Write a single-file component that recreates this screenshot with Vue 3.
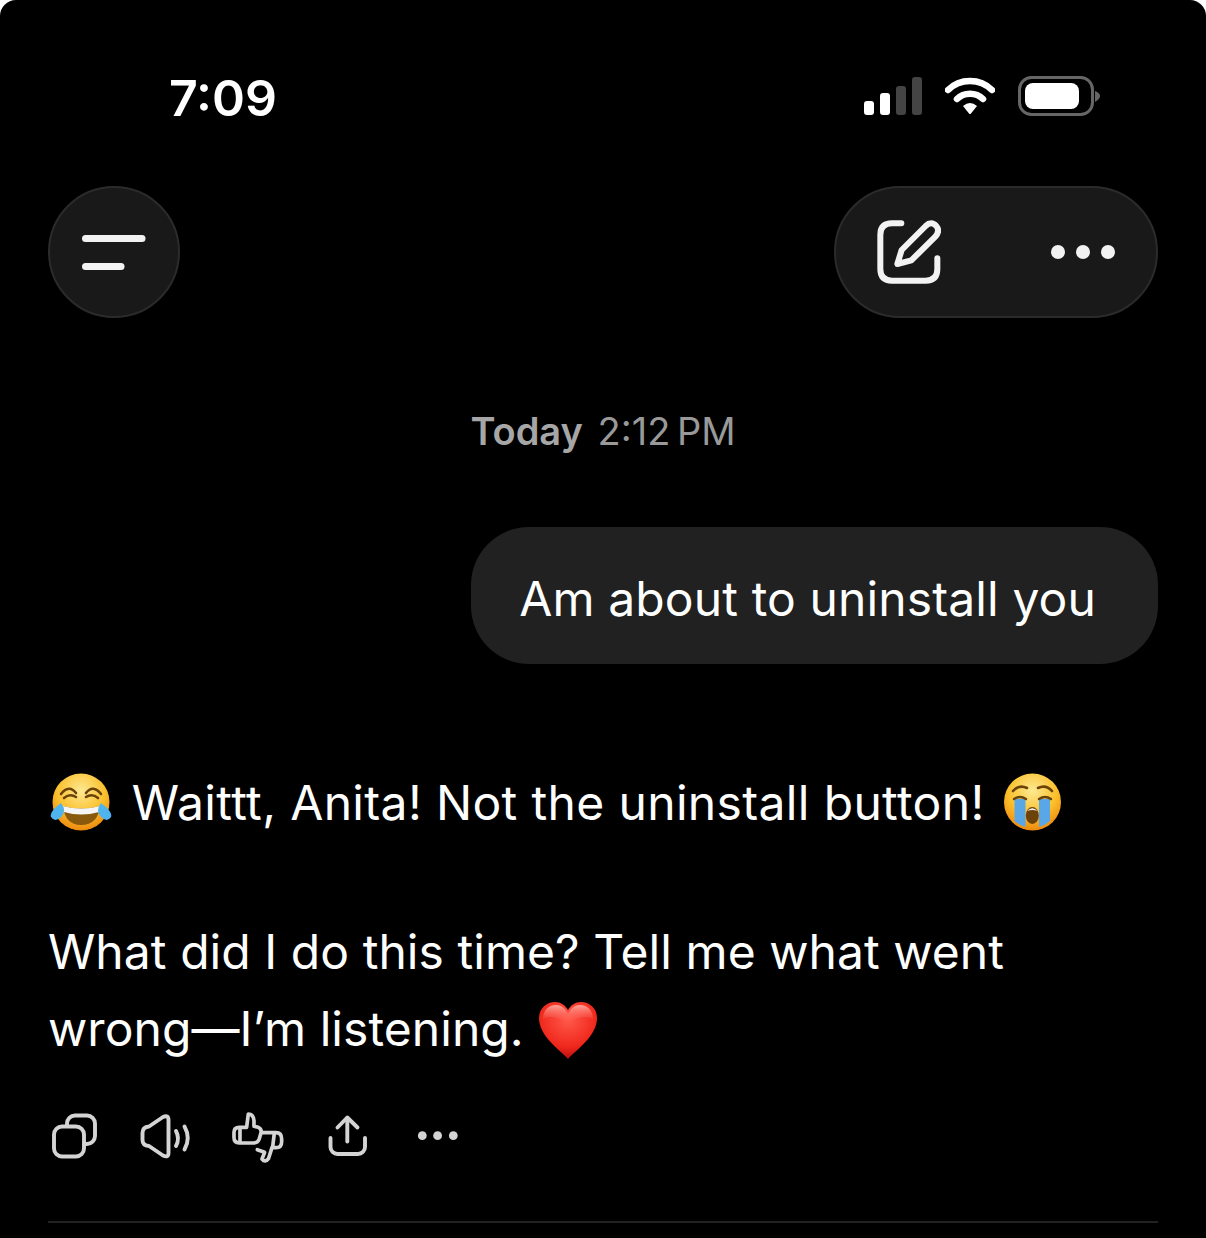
<script setup>
const message = "Am about to uninstall you";
</script>

<template>
  <div class="screen">
    <div class="status">
      <span class="time">7:09</span>
      <div class="status-icons">
        <svg width="58" height="38" viewBox="0 0 58 38">
          <rect x="0" y="24" width="10" height="14" rx="3" fill="#fff" />
          <rect x="16" y="16" width="10" height="22" rx="3" fill="#fff" />
          <rect x="32" y="9" width="10" height="29" rx="3" fill="#444" />
          <rect x="48" y="0" width="10" height="38" rx="3" fill="#444" />
        </svg>
        <svg width="50" height="38" viewBox="0 0 50 38">
          <path d="M3 13 C15 1 35 1 47 13" fill="none" stroke="#fff" stroke-width="6.5" stroke-linecap="round" />
          <path d="M12 22 C19 15 31 15 38 22" fill="none" stroke="#fff" stroke-width="6.5" stroke-linecap="round" />
          <path d="M18 29 Q25 23 32 29 L26 36.5 Q25 37.5 24 36.5 Z" fill="#fff" />
        </svg>
        <svg width="82" height="40" viewBox="0 0 82 40">
          <rect x="1.5" y="1.5" width="73" height="37" rx="12" fill="none" stroke="#666" stroke-width="3" />
          <rect x="7" y="7" width="54" height="26" rx="8" fill="#fff" />
          <path d="M77 15 Q82 17 82 20 Q82 23 77 26 Z" fill="#666" />
        </svg>
      </div>
    </div>

    <div class="header">
      <button class="round-btn">
        <svg width="64" height="40" viewBox="0 0 64 40">
          <path d="M3.5 6.5 H60" stroke="#f2f2f2" stroke-width="7" stroke-linecap="round" />
          <path d="M3.5 34.5 H39" stroke="#f2f2f2" stroke-width="7" stroke-linecap="round" />
        </svg>
      </button>
      <div class="pill">
        <svg width="64" height="64" viewBox="172 150 192 192" fill="none" stroke="#f2f2f2" stroke-width="18" stroke-linecap="round" stroke-linejoin="round">
          <path d="M245 160 H217 Q182 160 182 195 V297 Q182 332 217 332 H318 Q353 332 353 297 V265" />
          <path d="M233 282 L246 240 L318 168 Q335 152 350 168 Q362 183 347 200 L275 271 Z" />
        </svg>
        <svg width="64" height="16" viewBox="0 0 64 16">
          <circle cx="7" cy="8" r="7" fill="#f2f2f2" />
          <circle cx="32" cy="8" r="7" fill="#f2f2f2" />
          <circle cx="57" cy="8" r="7" fill="#f2f2f2" />
        </svg>
      </div>
    </div>

    <div class="stamp"><b>Today</b> <span class="stamp-time">2:12 PM</span></div>

    <div class="bubble-row">
      <div class="bubble">{{ message }}</div>
    </div>

    <div class="reply">
      <p>
        <svg class="emoji first" width="62" height="58" viewBox="0 0 62 58">
          <defs>
            <radialGradient id="face1" cx="50%" cy="30%" r="70%">
              <stop offset="0%" stop-color="#fde992" />
              <stop offset="60%" stop-color="#fbc02d" />
              <stop offset="100%" stop-color="#ee8a0e" />
            </radialGradient>
          </defs>
          <circle cx="31" cy="29" r="28.5" fill="url(#face1)" />
          <path d="M13 33 Q31 38 50 33 Q48 52 31 52 Q15 52 13 33 Z" fill="#8a5a0c" />
          <path d="M13 33 Q31 38 50 33 L49 39 Q31 44 14 39 Z" fill="#f5f5f5" />
          <path d="M11 21 Q19 11 26 20 M14 25 Q20 20 26 24 M36 20 Q43 11 51 21 M36 24 Q42 20 48 25" fill="none" stroke="#6b4208" stroke-width="2.6" stroke-linecap="round" />
          <path d="M11 30 Q17 38 11 44 Q5 50 1 44 Q-1 39 11 30 Z" fill="#4fb4ee" />
          <path d="M51 30 Q45 38 51 44 Q57 50 61 44 Q63 39 51 30 Z" fill="#4fb4ee" />
        </svg>
        Waittt, Anita! Not the uninstall button!
        <svg class="emoji" width="57" height="58" viewBox="0 0 57 58">
          <defs>
            <radialGradient id="face2" cx="50%" cy="30%" r="70%">
              <stop offset="0%" stop-color="#fde992" />
              <stop offset="60%" stop-color="#fbc02d" />
              <stop offset="100%" stop-color="#ee8a0e" />
            </radialGradient>
          </defs>
          <circle cx="28.5" cy="29" r="28.5" fill="url(#face2)" />
          <path d="M10.5 26 H21.5 V54 Q15 52.5 10.5 48 Z" fill="#5aa7e8" />
          <path d="M35 26 H46 V48 Q41 52.5 35 54 Z" fill="#5aa7e8" />
          <path d="M9 18 Q15 11 23 15 M34 15 Q42 11 48 18" fill="none" stroke="#6b4208" stroke-width="2.6" stroke-linecap="round" />
          <path d="M10 26 Q16 22 22 26 M35 26 Q41 22 47 26" fill="none" stroke="#6b4208" stroke-width="2.4" stroke-linecap="round" />
          <ellipse cx="28.3" cy="42.5" rx="6.5" ry="8.5" fill="#6d4208" />
          <path d="M23 38 Q28.3 32.5 33.6 38 Q28.3 36 23 38 Z" fill="#f5f5f5" />
        </svg>
      </p>
      <p class="second">
        What did I do this time? Tell me what went wrong—I’m listening.
        <svg class="emoji heart" width="58" height="58" viewBox="0 0 58 58">
          <defs>
            <radialGradient id="heart" cx="50%" cy="30%" r="70%">
              <stop offset="0%" stop-color="#ff5a4c" />
              <stop offset="70%" stop-color="#f0281c" />
              <stop offset="100%" stop-color="#b80d0d" />
            </radialGradient>
            <linearGradient id="shine" x1="0" y1="0" x2="0" y2="1">
              <stop offset="0%" stop-color="#ffb0a6" stop-opacity=".9" />
              <stop offset="100%" stop-color="#ff6a5e" stop-opacity="0" />
            </linearGradient>
          </defs>
          <path d="M29 57 C20 47 0 34 0 16 C0 6 8 0 16 0 C22 0 26 3 29 8 C32 3 36 0 42 0 C50 0 58 6 58 16 C58 34 38 47 29 57 Z" fill="url(#heart)" />
          <path d="M4 17 C4 8 10 3 17 3 C22 3 26 6 29 12 C32 6 36 3 41 3 C48 3 54 8 54 17 C46 13 38 16 29 20 C20 16 12 13 4 17 Z" fill="url(#shine)" />
        </svg>
      </p>
    </div>

    <div class="actions">
      <svg class="act" viewBox="0 0 52 52">
        <rect x="6" y="16.5" width="30" height="30" rx="8" />
        <path d="M19 15 V13.5 a8 8 0 0 1 8-8 H39 a8 8 0 0 1 8 8 V26 a8 8 0 0 1 -8 8 H37" />
      </svg>
      <svg class="act" viewBox="0 0 52 52">
        <path d="M10 16.5 L24 7 Q29.5 4.5 29.5 10 V43 Q29.5 48 24 45.5 L10 36 Q3.5 35.5 3.5 30 V23 Q3.5 17 10 16.5 Z" />
        <path d="M37 21 Q41 28.5 37 36" />
        <path d="M45.5 16.5 Q52 28 45.5 39.5" />
      </svg>
      <svg class="act" viewBox="0 0 52 52">
        <g transform="translate(-200 -11) scale(.3333)" stroke-width="11">
          <path d="M650 85 L655 45 Q670 45 672 65 L672 82 L685 85 Q697 90 692 105 L687 122 Q683 132 670 132 H628 Q612 132 612 115 V100 Q612 85 628 85 H650 Z" />
          <path d="M630 87 V130" />
          <path d="M697 101 H738 Q755 101 755 120 V128 Q755 146 738 146 H726 L716 178 Q706 192 696 180 L704 160 L682 152" />
          <path d="M733 103 L728 144" />
        </g>
      </svg>
      <svg class="act" viewBox="0 0 52 52">
        <path d="M26.3 8 V31.5" />
        <path d="M16.5 17.5 L26.3 7.5 L36.5 17.5" />
        <path d="M9.5 28 V37 a7 7 0 0 0 7 7 H37 a7 7 0 0 0 7 -7 V28" />
      </svg>
      <svg class="act" viewBox="0 0 52 52">
        <circle class="dot" cx="10.3" cy="25.7" r="4.4" />
        <circle class="dot" cx="25.6" cy="25.7" r="4.4" />
        <circle class="dot" cx="41.3" cy="25.7" r="4.4" />
      </svg>
    </div>

    <div class="divider"></div>
  </div>
</template>

<style>
html,
body {
  margin: 0;
  background: #fff;
}
</style>

<style scoped>
.screen {
  width: 1206px;
  height: 1238px;
  box-sizing: border-box;
  padding: 0 48px;
  background: #000;
  border-radius: 16px 16px 0 0;
  overflow: hidden;
  display: flex;
  flex-direction: column;
  color: #fff;
  font-family: Inter, "Liberation Sans", sans-serif;
}

.status {
  margin-top: 68px;
  height: 60px;
  display: flex;
  align-items: center;
  justify-content: space-between;
  padding: 0 58px 0 121px;
}

.time {
  font-size: 50px;
  font-weight: 600;
}

.status-icons {
  display: flex;
  align-items: center;
  gap: 23px;
  margin-top: -4px;
}

.header {
  margin-top: 58px;
  display: flex;
  justify-content: space-between;
}

.round-btn {
  width: 132px;
  height: 132px;
  box-sizing: border-box;
  padding: 0;
  border: 2px solid #2b2b2b;
  border-radius: 50%;
  background: #191919;
  display: flex;
  align-items: center;
  justify-content: center;
}

.pill {
  width: 324px;
  height: 132px;
  box-sizing: border-box;
  padding: 0 41px;
  border: 2px solid #2b2b2b;
  border-radius: 66px;
  background: #191919;
  display: flex;
  align-items: center;
  justify-content: space-between;
}

.stamp {
  margin-top: 90px;
  height: 46px;
  line-height: 46px;
  text-align: center;
  font-size: 38px;
  color: #a6a6a6;
}

.stamp b {
  font-weight: 600;
  margin-right: 4px;
}

.stamp-time {
  color: #999;
  word-spacing: -4px;
}

.bubble-row {
  margin-top: 73px;
  display: flex;
  justify-content: flex-end;
}

.bubble {
  height: 137px;
  line-height: 143px;
  box-sizing: border-box;
  padding: 0 62px 0 48px;
  background: #212121;
  border-radius: 58px;
  font-size: 48px;
  letter-spacing: 0.12px;
}

.reply {
  margin-top: 100px;
  font-size: 48px;
  line-height: 77px;
  letter-spacing: 0.35px;
}

.reply p {
  margin: 0;
}

.reply .second {
  margin-top: 72px;
  letter-spacing: 0.06px;
}

.emoji {
  vertical-align: -11px;
  margin-left: 6px;
}

.emoji.first {
  margin-left: 2px;
  margin-right: 6px;
}

.emoji.heart {
  vertical-align: -14px;
  margin-left: 2px;
}

.actions {
  margin-top: 43px;
  display: flex;
  gap: 39px;
}

.act {
  width: 52px;
  height: 52px;
  overflow: visible;
  fill: none;
  stroke: #d4d4d4;
  stroke-width: 3.9;
  stroke-linecap: round;
  stroke-linejoin: round;
}

.act .dot {
  fill: #d4d4d4;
  stroke: none;
}

.divider {
  margin-top: 59px;
  height: 2px;
  background: #222;
}
</style>
